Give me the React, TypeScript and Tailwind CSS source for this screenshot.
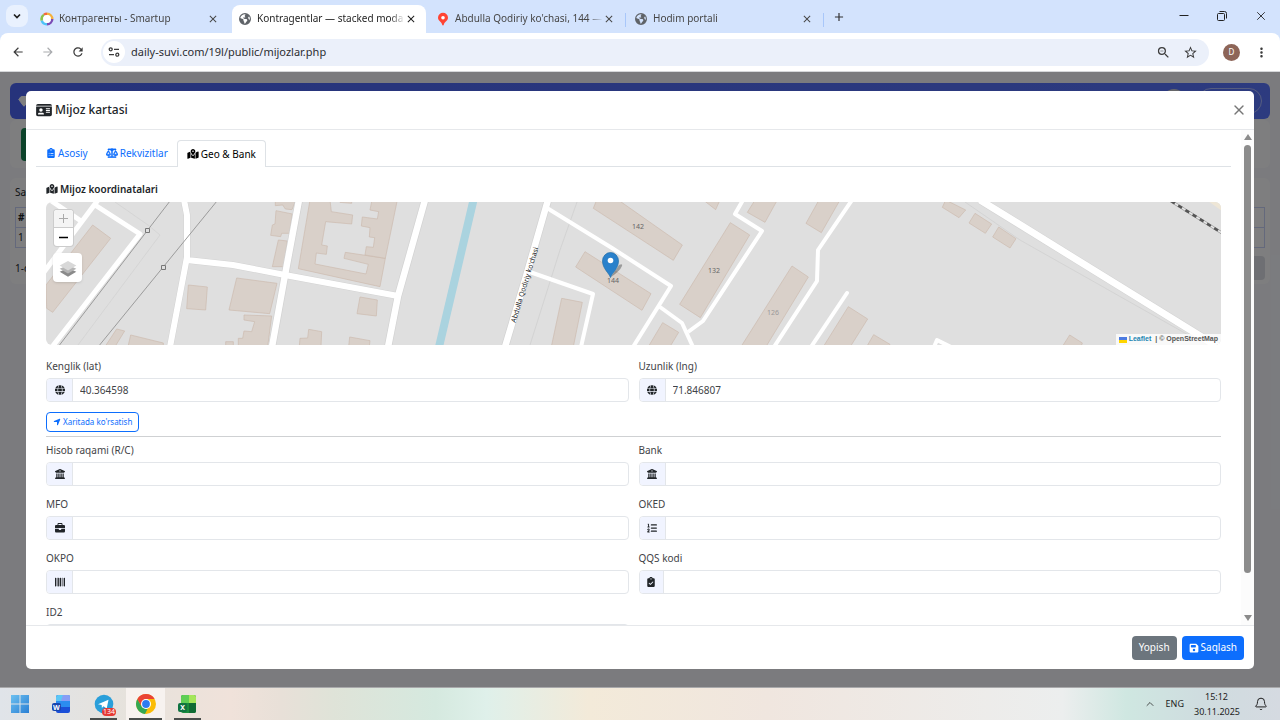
import type { ReactNode } from "react";
import {
  FaAddressCard,
  FaBarcode,
  FaBriefcase,
  FaBuildingColumns,
  FaClipboardCheck,
  FaClipboardList,
  FaEarthAmericas,
  FaFloppyDisk,
  FaGlobe,
  FaIdCard,
  FaListOl,
  FaLocationArrow,
  FaMapLocationDot,
  FaScaleBalanced,
} from "react-icons/fa6";
import {
  MdAdd,
  MdArrowBack,
  MdArrowForward,
  MdClose,
  MdMoreVert,
  MdOutlineZoomOut,
  MdRefresh,
  MdStarBorder,
} from "react-icons/md";
import { Bell, ChevronUp, Gem, X } from "lucide-react";

/* ---------- Browser chrome ---------- */

function SmartupIcon() {
  return (
    <svg viewBox="0 0 14 14" className="size-3.5 shrink-0" fill="none" strokeWidth="2.6">
      <path d="M7 1.8A5.2 5.2 0 0 1 12.2 7" stroke="#f5b13d" />
      <path d="M12.2 7A5.2 5.2 0 0 1 7 12.2" stroke="#7b4bb5" />
      <path d="M7 12.2A5.2 5.2 0 0 1 1.8 8.5" stroke="#4fc3f7" />
      <path d="M1.8 8.5A5.2 5.2 0 0 1 4 2.8" stroke="#8bc34a" />
      <path d="M4 2.8A5.2 5.2 0 0 1 7 1.8" stroke="#f4683c" />
      <circle cx="7" cy="7" r="3.9" fill="#fff" />
    </svg>
  );
}

function PinIcon() {
  return (
    <svg viewBox="0 0 14 14" className="size-3.5 shrink-0">
      <path d="M7 .8a5 5 0 0 0-5 5c0 3.2 3.6 3.8 4.3 7.2.1.6 1.3.6 1.4 0C8.4 9.6 12 9 12 5.800a5 5 0 0 0-5-5z" fill="#f43" />
      <circle cx="7" cy="5.700" r="1.800" fill="#fff" />
    </svg>
  );
}

function BrowserTab({ icon, title, active, divider }: { icon: ReactNode; title: string; active?: boolean; divider?: boolean }) {
  return (
    <div
      className={
        active
          ? "relative mr-1 flex h-7 w-[194px] shrink-0 items-center rounded-t-lg bg-white pr-[9px] pl-1.5 text-[#1f1f1f]"
          : "relative mr-1 flex h-7 w-[194px] shrink-0 items-center pr-[9px] pl-1.5 text-[#474747]"
      }
    >
      {icon}
      <span className="ml-[5px] min-w-0 flex-1 overflow-hidden pb-px text-[10px] whitespace-nowrap [mask-image:linear-gradient(to_right,#000_90%,transparent)]">
        {title}
      </span>
      <button type="button" aria-label="Close tab" className="shrink-0">
        <MdClose className="size-3" />
      </button>
      {divider && <span className="absolute top-2 -right-0.5 h-3.5 w-px bg-[#a8c7fa]" />}
    </div>
  );
}

function TabStrip() {
  return (
    <div className="flex h-[33px] shrink-0 items-end bg-[#d3e3fd] pl-1.5">
      <button type="button" aria-label="Search tabs" className="mr-1.5 mb-1.5 flex size-[22px] items-center justify-center rounded-lg bg-[#e9f1fe]">
        <svg viewBox="0 0 10 10" className="size-2.5" fill="none" stroke="#1f1f1f" strokeWidth="1.700">
          <path d="M2 3.500l3 3 3-3" />
        </svg>
      </button>
      <BrowserTab icon={<SmartupIcon />} title="Контрагенты - Smartup" />
      <BrowserTab icon={<FaEarthAmericas className="mx-px size-3 shrink-0 text-[#5f6368]" />} title="Kontragentlar — stacked moda" active />
      <BrowserTab icon={<PinIcon />} title="Abdulla Qodiriy ko'chasi, 144 —" divider />
      <BrowserTab icon={<FaEarthAmericas className="mx-px size-3 shrink-0 text-[#5f6368]" />} title="Hodim portali" divider />
      <button type="button" aria-label="New tab" className="mb-[9px] ml-1.5 text-[#303030]">
        <MdAdd className="size-3.5" />
      </button>
      <div className="mr-3 mb-2.5 ml-auto flex items-center gap-[26px] text-[#222]">
        <button type="button" aria-label="Minimize">
          <svg viewBox="0 0 12 12" className="size-3" stroke="currentColor">
            <path d="M1.500 5.500h9" />
          </svg>
        </button>
        <button type="button" aria-label="Restore">
          <svg viewBox="0 0 12 12" className="size-3" stroke="currentColor" fill="none">
            <rect x="1.500" y="3.500" width="7" height="7" rx="1" />
            <path d="M3.500 1.500h5a2 2 0 0 1 2 2v5" />
          </svg>
        </button>
        <button type="button" aria-label="Close window">
          <X className="size-3.5" strokeWidth={1.5} />
        </button>
      </div>
    </div>
  );
}

function Toolbar() {
  return (
    <div className="bg-[#d3e3fd]">
      <div className="flex h-[39px] items-center rounded-t-lg border-b border-[#d5d7da] bg-white pr-[11px] pl-[11px] text-[#3c3c3c]">
        <button type="button" aria-label="Back" className="mr-4"><MdArrowBack className="size-3.5" /></button>
        <button type="button" aria-label="Forward" className="mr-4 text-[#a9abae]"><MdArrowForward className="size-3.5" /></button>
        <button type="button" aria-label="Reload" className="mr-4"><MdRefresh className="size-3.5" /></button>
        <div className="flex h-[27px] flex-1 items-center rounded-full bg-[#ebf0fa] pr-[11px] pl-0.5">
          <button type="button" aria-label="Site information" className="mr-1.5 flex size-[22px] items-center justify-center rounded-full bg-white">
            <svg viewBox="0 0 12 12" className="size-3" fill="none" stroke="#3c3c3c" strokeWidth="1.300">
              <circle cx="2.700" cy="3.300" r="1.500" />
              <path d="M6 3.300h5M1 8.700h5" />
              <circle cx="9.300" cy="8.700" r="1.500" />
            </svg>
          </button>
          <input
            aria-label="Address bar"
            defaultValue="daily-suvi.com/19l/public/mijozlar.php"
            className="min-w-0 flex-1 bg-transparent text-[11px] text-[#2b2d31] outline-none"
          />
          <button type="button" aria-label="Zoom" className="mr-3"><MdOutlineZoomOut className="size-[15px]" /></button>
          <button type="button" aria-label="Bookmark"><MdStarBorder className="size-[15px]" /></button>
        </div>
        <button type="button" aria-label="Profile" className="ml-3.5 flex size-[17px] items-center justify-center rounded-full bg-[#8d6558] text-[8px] text-white">
          D
        </button>
        <button type="button" aria-label="Menu" className="ml-3.5"><MdMoreVert className="size-[15px]" /></button>
      </div>
    </div>
  );
}

/* ---------- Page behind the dialog ---------- */

function DimmedPage() {
  return (
    <div aria-hidden="true" className="flex h-full flex-col bg-[#f6f7fd] px-2.5 pt-[11px] text-[10px] text-[#212529]">
      <div className="flex h-9 shrink-0 items-center rounded-md bg-linear-to-r from-[#4c66f6] to-[#5a76ff] px-2 text-white">
        <Gem className="size-3" fill="currentColor" />
        <span className="mr-3 ml-auto size-6 rounded-full bg-[#fff3c0]/70" />
        <span className="h-[26px] w-16 rounded-full border border-white/50" />
      </div>
      <div className="mt-px h-12 shrink-0 rounded-md bg-white/70 p-2 pl-[11px]">
        <div className="h-[33px] w-24 rounded-sm bg-[#198754]" />
      </div>
      <div className="mt-2.5 h-[106px] shrink-0 rounded-md bg-white/70 px-[5px] pt-1.5">
        <div className="leading-4">Sahifada</div>
        <table className="mt-[7px] w-full border-collapse">
          <tbody>
            <tr className="h-5">
              <th className="border border-[#c8d3f8] pl-0.5 text-left">#</th>
              <th className="w-40 border border-[#c8d3f8]" />
            </tr>
            <tr className="h-5">
              <td className="border border-[#c8d3f8] pl-0.5">1</td>
              <td className="border border-[#c8d3f8]" />
            </tr>
          </tbody>
        </table>
        <div className="mt-2 flex h-6 items-center justify-between">
          <span>1-dan 1 gacha</span>
          <span className="h-6 w-20 rounded-sm bg-[#dcdfe6]" />
        </div>
      </div>
    </div>
  );
}

/* ---------- Map ---------- */

function CityMap() {
  const scale = "scale(0.33333)";
  return (
    <svg viewBox="46 202 1175 143" preserveAspectRatio="xMidYMid slice" className="block h-[143px] w-full" role="img" aria-label="Xarita">
      <rect x="0" y="150" width="1300" height="250" fill="#dfdfdf" />

      <g transform={`translate(40 195) ${scale}`} fill="#d9d0c9" stroke="#cbb9ad" strokeWidth="2">
        <path d="M158 90L212 130 38 352 20 340 18 270z" />
        <path d="M445 270L502 276 497 345 440 341z" />
        <path d="M590 249L711 265 689 356 567 345z" />
        <path d="M612 360L695 363 683 455 595 455 595 430 608 430 612 408 635 410 644 380 612 375z" />
        <path d="M230 402L254 408 225 455 195 455z" />
        <path d="M272 420L370 444 370 455 264 455z" />
        <path d="M557 440L580 440 580 455 557 455z" />
        <path d="M806 403L845 410 843 455 778 455 780 430 803 429z" />
        <path d="M929 426L990 437 988 455 926 455z" />
        <path d="M960 306L1012 315 1009 363 951 356z" />
        <path d="M706 15H768L756 44 736 42 728 30 706 32z" />
        <path d="M708 47L757 57 748 115 725 115 722 125 692 121 697 90 705 87z" />
        <path d="M715 135L742 138 731 215 697 215z" />
        <path d="M810 15H870L874 50 938 60 935 87 857 80 845 150 862 153 859 178 829 174 825 207 978 237 985 208 912 190 916 172 1036 190 1020 275 775 221z" />
        <path d="M996 15H1072L1036 190 975 180 979 155 1000 157 1004 128 988 126 990 98 964 93 967 66 1012 72 1016 50 990 45z" />
        <path d="M900 15H935V25L900 22z" />
      </g>
      <g transform={`translate(430 195) ${scale}`} fill="#d9d0c9" stroke="#cbb9ad" strokeWidth="2">
        <path d="M500 15H565L757 150 730 196 490 40z" />
        <path d="M465 170L663 296 636 346 437 216z" />
        <path d="M395 310L457 322 430 455 364 455z" />
        <path d="M698 383L746 412 720 455 655 455z" />
        <path d="M901 83L959 120 811 368 749 328z" />
        <path d="M1086 213L1135 246 1008 455 933 455z" />
        <path d="M820 15H870L857 44z" />
        <path d="M975 15H1042L1005 82 952 52z" />
        <path d="M1167 15H1230L1174 113 1128 85z" />
      </g>
      <g transform={`translate(825 195) ${scale}`} fill="#d9d0c9" stroke="#cbb9ad" strokeWidth="2">
        <path d="M70 335L128 372 76 455-5 455z" />
        <path d="M146 419L195 448 190 455 125 455z" />
        <path d="M362 15L422 45 402 68 352 37z" />
        <path d="M450 55L500 87 481 115 432 84z" />
        <path d="M521 96L573 131 555 159 503 126z" />
        <path d="M734 420L772 444 768 455 712 455z" />
      </g>

      <g fill="none" stroke="#cfcfcf" strokeWidth="1">
        <path d="M115 202L148 225 160 235 78 345" opacity=".6" />
        <path d="M577 202L560 250 530 345" opacity=".8" />
        <path d="M965 202L1020 240 1190 336" opacity=".7" />
      </g>

      <path d="M473.500 200L439 347" stroke="#aad3df" strokeWidth="8" fill="none" />

      <g fill="none" stroke="#d3d3d3" strokeLinejoin="round">
        <path d="M299 200L285 275 272 347M425 200L398 296 388 347M548 200L525 280 505 347" strokeWidth="8" />
        <path d="M184 200L187 215 187 257 170 347M187 260L233 265 285 275 398 296" strokeWidth="7" />
        <path d="M980 200L1218 347" strokeWidth="8" />
      </g>
      <g fill="none" stroke="#fff" strokeLinejoin="round">
        <path d="M299 200L285 275 272 347M425 200L398 296 388 347M548 200L525 280 505 347" strokeWidth="6.500" />
        <path d="M184 200L187 215 187 257 170 347M187 260L233 265 285 275 398 296" strokeWidth="6" />
        <path d="M980 200L1218 347" strokeWidth="7" />
        <path d="M50 200L81 221M98 200L44 272M95 205L140 234 52 347" strokeWidth="5" />
        <path d="M547 208L612 248 671 286 633 347M527 271L593 294 581 347M660 307L682 323 693 347" strokeWidth="4" />
        <path d="M743 200L735 214 762 231 703 321 688 332M852 200L818 250 817 281 774 347" strokeWidth="4" />
        <path d="M847 293L811 347M934 347L937 340 951 347" strokeWidth="4" strokeLinecap="round" />
      </g>

      <g fill="none" stroke="#9b9b9b" strokeWidth="1">
        <path d="M170 201L58 347M217 201L98 347" />
        <path d="M145.500 228.500h4v4h-4zM161.500 265.500h4v4h-4z" fill="#dfdfdf" stroke="#777" />
      </g>
      <path d="M1208 201L1222 211V201z" fill="#eee6d6" />
      <path d="M1171 201L1222 233" stroke="#999" strokeWidth="2.800" />
      <path d="M1171 201L1222 233" stroke="#e8e8e8" strokeWidth="1.600" />
      <path d="M1171 201L1222 233" stroke="#555" strokeWidth="2.600" strokeDasharray="4.500 4" />

      <g fontFamily="Noto Sans, sans-serif" fontSize="7" fill="#666" textAnchor="middle">
        <text x="638" y="229">142</text>
        <text x="714" y="273">132</text>
        <text x="773" y="315" fill="#999">126</text>
        <text x="613" y="283">144</text>
        <text x="525" y="287" fill="#222" transform="rotate(-73 525 285)">Abdulla Qodiriy ko'chasi</text>
      </g>

      <path d="M611 277L619 265q4-2 3 1-2 5-11 11z" fill="#000" opacity=".3" />
      <path d="M610.500 277.500c-1.500-4.500-8-9-8-16.500a8 8.500 0 0 1 16 0c0 7.500-6.500 12-8 16.500z" fill="#2a81cb" stroke="#236fa8" strokeWidth=".7" />
      <circle cx="610.500" cy="260.500" r="2.800" fill="#fff" />
    </svg>
  );
}

function MapPanel() {
  return (
    <div className="relative overflow-hidden rounded-md">
      <CityMap />
      <div className="absolute top-[7px] left-[7px] flex flex-col gap-1.5">
        <div className="w-[21px] overflow-hidden rounded-sm border border-black/20 bg-white text-black">
          <button type="button" aria-label="Zoom in" disabled className="flex h-[18px] w-full items-center justify-center border-b border-[#ccc] bg-[#f4f4f4] text-[#aaa]">
            <svg viewBox="0 0 9 9" className="size-[9px]" stroke="currentColor"><path d="M0 4.500h9M4.500 0v9" /></svg>
          </button>
          <button type="button" aria-label="Zoom out" className="flex h-[18px] w-full items-center justify-center">
            <svg viewBox="0 0 9 9" className="size-[9px]" stroke="currentColor" strokeWidth="1.500"><path d="M0 4.500h9" /></svg>
          </button>
        </div>
        <button type="button" aria-label="Layers" className="flex size-[29px] items-center justify-center rounded-sm bg-white shadow-sm">
          <svg viewBox="0 0 26 26" className="size-[18px]">
            <path d="M13 13L1 18.500 13 25.500 25 18.500z" fill="#8a8a8a" />
            <path d="M13 8.500L1 14 13 21 25 14z" fill="#b4b4b4" />
            <path d="M13 3L1 9.500 13 16.500 25 9.500z" fill="#d8d8d8" />
          </svg>
        </button>
      </div>
      <div className="absolute right-0 bottom-0 flex h-[11px] items-center bg-white/80 px-[3px] font-['Liberation_Sans',sans-serif] text-[7px] font-bold text-[#555]">
        <a href="#leaflet" className="flex items-center text-[#1b86b3]">
          <svg viewBox="0 0 8 6" className="mr-0.5 h-1.5 w-2">
            <path d="M0 0h8v3H0z" fill="#4c7be1" />
            <path d="M0 3h8v3H0z" fill="#ffd500" />
          </svg>
          Leaflet
        </a>
        <span className="ml-1">| © OpenStreetMap</span>
      </div>
    </div>
  );
}

/* ---------- Dialog ---------- */

function Field({ id, label, icon, value, narrow }: { id: string; label: string; icon: ReactNode; value?: string; narrow?: boolean }) {
  return (
    <div className="min-w-0">
      <label htmlFor={id} className="mb-1 block leading-4">{label}</label>
      <div className="flex h-6 overflow-hidden rounded-sm border border-[#e3e6ea]">
        <span
          className={
            narrow
              ? "flex w-6 shrink-0 items-center justify-center border-r border-[#e3e6ea] bg-[#f1f4ff] text-[#212529]"
              : "flex w-[26px] shrink-0 items-center justify-center border-r border-[#e3e6ea] bg-[#f1f4ff] text-[#212529]"
          }
        >
          {icon}
        </span>
        <input id={id} defaultValue={value} className="min-w-0 flex-1 px-[7px] outline-none" />
      </div>
    </div>
  );
}

function TabBar() {
  const idle = "flex h-[26px] items-center gap-0.5 px-[9px] text-[#0d6efd]";
  return (
    <div role="tablist" className="flex border-b border-[#dee2e6] pl-px">
      <button type="button" role="tab" aria-selected="false" className={idle}>
        <FaClipboardList className="size-2.5" />
        Asosiy
      </button>
      <button type="button" role="tab" aria-selected="false" className={idle}>
        <FaScaleBalanced className="h-2.5 w-3" strokeWidth={20} stroke="currentColor" />
        Rekvizitlar
      </button>
      <button type="button" role="tab" aria-selected="true" className="-mb-px flex h-[27px] items-center gap-0.5 rounded-t-sm border border-b-0 border-[#dee2e6] bg-white px-[9px] text-black">
        <FaMapLocationDot className="h-2.5 w-3" />
        Geo &amp; Bank
      </button>
    </div>
  );
}

function CustomerDialog() {
  const icon = "size-2.5";
  return (
    <div role="dialog" aria-label="Mijoz kartasi" className="flex min-h-0 flex-1 flex-col overflow-hidden rounded-[5px] bg-white text-[10px] text-[#3f4347]">
      <header className="flex h-[39px] shrink-0 items-center border-b border-[#e6e8eb] pr-[7px] pl-2.5">
        <FaIdCard className="h-3.5 w-4 text-[#212529]" />
        <h1 className="ml-[3px] text-xs font-medium text-[#212529]">Mijoz kartasi</h1>
        <button type="button" aria-label="Yopish" className="ml-auto text-[#777]"><X className="size-4" strokeWidth={2} /></button>
      </header>

      <div className="flex min-h-0 flex-1">
        <div className="min-w-0 flex-1 overflow-y-auto px-2.5 pt-2.5 [scrollbar-width:none]">
          <TabBar />
          <div className="px-2.5 pt-3.5">
            <h2 className="mb-[5px] flex items-center gap-0.5 leading-4 font-semibold text-[#212529]">
              <FaMapLocationDot className="h-2.5 w-3" />
              Mijoz koordinatalari
            </h2>
            <MapPanel />
            <div className="mt-[13px] grid grid-cols-2 gap-2.5">
              <Field id="lat" label="Kenglik (lat)" icon={<FaGlobe className={icon} />} value="40.364598" />
              <Field id="lng" label="Uzunlik (lng)" icon={<FaGlobe className={icon} />} value="71.846807" />
            </div>
            <button type="button" className="mt-2.5 flex h-5 items-center gap-0.5 rounded-sm border border-[#0d6efd] px-1.5 text-[8px] text-[#0d6efd]">
              <FaLocationArrow className="size-2" />
              Xaritada ko'rsatish
            </button>
            <hr className="mt-1 mb-[5px] border-[#cfd1d3]" />
            <div className="grid grid-cols-2 gap-2.5">
              <Field id="account" label="Hisob raqami (R/C)" icon={<FaBuildingColumns className={icon} />} />
              <Field id="bank" label="Bank" icon={<FaBuildingColumns className={icon} />} />
              <Field id="mfo" label="MFO" icon={<FaBriefcase className={icon} />} />
              <Field id="oked" label="OKED" icon={<FaListOl className={icon} />} />
              <Field id="okpo" label="OKPO" icon={<FaBarcode className={icon} />} />
              <Field id="vat" label="QQS kodi" icon={<FaClipboardCheck className={icon} />} narrow />
              <Field id="id2" label="ID2" icon={<FaAddressCard className={icon} />} />
            </div>
          </div>
        </div>
        <div aria-hidden="true" className="flex w-[13px] shrink-0 flex-col items-center bg-[#fcfcfc] py-[3px] text-[#8b8b8b]">
          <svg viewBox="0 0 8 8" className="size-2 shrink-0"><path d="M4 1l4 6H0z" fill="currentColor" /></svg>
          <div className="mt-1 h-[428px] w-[7px] shrink rounded-full bg-[#8b8b8b]" />
          <svg viewBox="0 0 8 8" className="mt-auto size-2 shrink-0"><path d="M4 7l4-6H0z" fill="currentColor" /></svg>
        </div>
      </div>

      <footer className="flex h-11 shrink-0 items-center justify-end gap-[5px] border-t border-[#e6e8eb] px-2.5 text-white">
        <button type="button" className="h-6 rounded-sm bg-[#6c757d] px-[7px]">Yopish</button>
        <button type="button" className="flex h-6 items-center gap-0.5 rounded-sm bg-[#0d6efd] px-[7px]">
          <FaFloppyDisk className="size-2.5" />
          Saqlash
        </button>
      </footer>
    </div>
  );
}

/* ---------- Taskbar ---------- */

function WindowsLogo() {
  return (
    <svg viewBox="0 0 20 20" className="size-5">
      <defs>
        <linearGradient id="win" x1="0" y1="0" x2="1" y2="1">
          <stop offset="0" stopColor="#6cc0f0" />
          <stop offset="1" stopColor="#2a7fd4" />
        </linearGradient>
      </defs>
      <path d="M1 1h8.500v8.500H1zM10.500 1H19v8.500h-8.500zM1 10.500h8.500V19H1zM10.500 10.500H19V19h-8.500z" fill="url(#win)" />
    </svg>
  );
}

function WordLogo() {
  return (
    <svg viewBox="0 0 20 20" className="size-5">
      <rect x="4" y="1" width="14" height="18" rx="2" fill="#1b4fd8" />
      <path d="M4 3a2 2 0 0 1 2-2h10a2 2 0 0 1 2 2v4H4z" fill="#5cc6f5" />
      <path d="M11 1h5a2 2 0 0 1 2 2v4H9z" fill="#9a8cf5" opacity=".7" />
      <path d="M4 7h14v6H4z" fill="#2b8cf0" />
      <rect x="0" y="9" width="9" height="8" rx="2" fill="#1746b0" />
      <text x="4.500" y="15.500" fontSize="7" fontWeight="700" fontFamily="Noto Sans, sans-serif" fill="#fff" textAnchor="middle">W</text>
    </svg>
  );
}

function ExcelLogo() {
  return (
    <svg viewBox="0 0 20 20" className="size-5">
      <rect x="3" y="1" width="15" height="18" rx="2" fill="#188c3c" />
      <path d="M3 3a2 2 0 0 1 2-2h6v8H3z" fill="#5fcf55" />
      <path d="M11 1h5a2 2 0 0 1 2 2v6h-7z" fill="#a5e65a" />
      <path d="M11 9h7v8a2 2 0 0 1-2 2h-5z" fill="#0f6b34" />
      <rect x="0" y="9" width="9" height="9" rx="2" fill="#0f7340" />
      <text x="4.500" y="16" fontSize="7" fontWeight="700" fontFamily="Noto Sans, sans-serif" fill="#fff" textAnchor="middle">X</text>
    </svg>
  );
}

function TelegramLogo() {
  return (
    <svg viewBox="0 0 20 20" className="size-5">
      <circle cx="10" cy="10" r="9.300" fill="#2a9fda" />
      <path d="M4 10.200l10.500-4.400-1.800 8.800-3.200-2.300-1.600 1.600-.2-2.800z" fill="#fff" />
    </svg>
  );
}

function ChromeLogo() {
  return (
    <svg viewBox="0 0 20 20" className="size-5">
      <circle cx="10" cy="10" r="10" fill="#fbbc05" />
      <path d="M1.340 5L5.670 12.500 10 15l1.500 0L9 19.950A10 10 0 0 1 1.340 5z" fill="#34a853" />
      <path d="M1.340 5A10 10 0 0 1 18.660 5H10L5.670 12.500z" fill="#ea4335" />
      <circle cx="10" cy="10" r="5" fill="#fff" />
      <circle cx="10" cy="10" r="3.900" fill="#2f7cf0" />
    </svg>
  );
}

function TaskButton({ label, running, active, children }: { label: string; running?: boolean; active?: boolean; children: ReactNode }) {
  return (
    <button
      type="button"
      aria-label={label}
      className={
        active
          ? "relative flex h-full w-[39px] items-center justify-center bg-[#f7f2ef]"
          : "relative flex h-full w-[39px] items-center justify-center"
      }
    >
      {children}
      {running && <span className={active ? "absolute inset-x-[3px] bottom-0 h-0.5 bg-[#4a4d4b]" : "absolute inset-x-1.5 bottom-0 h-0.5 bg-[#4a4d4b]"} />}
    </button>
  );
}

function Taskbar() {
  return (
    <div className="flex h-[33px] shrink-0 items-center border-t border-[#a9a9ab] bg-[linear-gradient(to_right,#e0e4e9_0%,#e6e2dc_10%,#f0e2da_18%,#e8e0d8_22%,#dfe3d8_26%,#d5e9df_34%,#dff0ea_38%,#f3ead9_46%,#f0e6df_60%,#eceeee_83%,#cfe7e1_88%,#cfdcdf_94%,#d5dae1_100%)] text-[9px] text-[#1d1d1d]">
      <div className="flex h-full items-center gap-[3px]">
        <TaskButton label="Start"><WindowsLogo /></TaskButton>
        <TaskButton label="Word"><WordLogo /></TaskButton>
        <TaskButton label="Telegram" running>
          <TelegramLogo />
          <span className="absolute right-[7px] bottom-1 rounded-sm bg-[#e53935] px-px text-[7px] leading-2 text-white">134</span>
        </TaskButton>
        <TaskButton label="Chrome" running active><ChromeLogo /></TaskButton>
        <TaskButton label="Excel" running><ExcelLogo /></TaskButton>
      </div>
      <div className="ml-auto flex items-center pr-3">
        <ChevronUp className="size-3" strokeWidth={1.5} />
        <span className="ml-2.5">ENG</span>
        <div className="ml-2.5 text-right leading-[15px]">
          <div className="pr-3">15:12</div>
          <div>30.11.2025</div>
        </div>
        <Bell className="ml-3.5 size-3.5" strokeWidth={1.7} />
      </div>
    </div>
  );
}

export default function App() {
  return (
    <div className="flex h-screen flex-col overflow-hidden font-['Noto_Sans',sans-serif]">
      <TabStrip />
      <Toolbar />
      <main className="relative min-h-0 flex-1 overflow-hidden">
        <DimmedPage />
        <div className="absolute inset-0 flex flex-col bg-black/50 px-[26px] pt-[19px] pb-[18px]">
          <CustomerDialog />
        </div>
      </main>
      <Taskbar />
    </div>
  );
}
